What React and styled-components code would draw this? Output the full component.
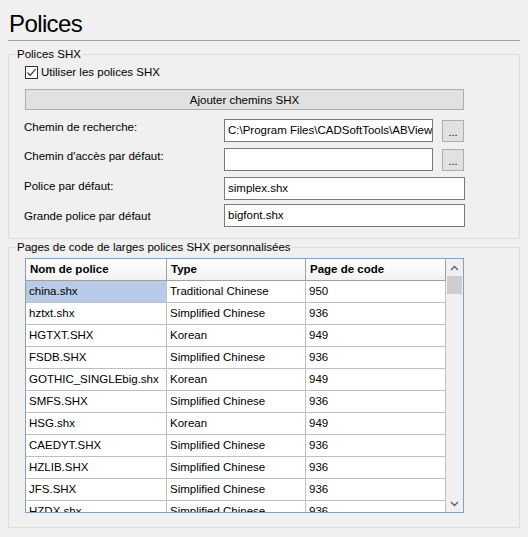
import React from 'react';
import styled, { createGlobalStyle } from 'styled-components';

const GlobalStyle = createGlobalStyle`
  * { box-sizing: border-box; }
  body {
    margin: 0;
    background: #f0f0f0;
    font-family: "Liberation Sans", Arial, sans-serif;
    font-size: 11.5px;
    color: #000;
  }
`;

const rows = [
  ['china.shx', 'Traditional Chinese', '950'],
  ['hztxt.shx', 'Simplified Chinese', '936'],
  ['HGTXT.SHX', 'Korean', '949'],
  ['FSDB.SHX', 'Simplified Chinese', '936'],
  ['GOTHIC_SINGLEbig.shx', 'Korean', '949'],
  ['SMFS.SHX', 'Simplified Chinese', '936'],
  ['HSG.shx', 'Korean', '949'],
  ['CAEDYT.SHX', 'Simplified Chinese', '936'],
  ['HZLIB.SHX', 'Simplified Chinese', '936'],
  ['JFS.SHX', 'Simplified Chinese', '936'],
  ['HZDX.shx', 'Simplified Chinese', '936'],
];

const App = () => (
  <Page>
    <GlobalStyle />
    <Title>Polices</Title>

    <Group height={185}>
      <Legend>Polices SHX</Legend>
      <CheckRow>
        <CheckBox>
          <svg width="11" height="11" viewBox="0 0 11 11">
            <path d="M1.5 5.5 L4.2 8.3 L9.6 2.2" fill="none" stroke="#333" strokeWidth="1.2" />
          </svg>
        </CheckBox>
        Utiliser les polices SHX
      </CheckRow>
      <WideButton type="button">Ajouter chemins SHX</WideButton>

      <Form>
        <FormRow>
          <Label shift={1}>Chemin de recherche:</Label>
          <Field narrow>C:\Program Files\CADSoftTools\ABViewer 15\Fonts</Field>
          <DotsButton type="button">...</DotsButton>
        </FormRow>
        <FormRow>
          <Label shift={1}>Chemin d'accès par défaut:</Label>
          <Field narrow />
          <DotsButton type="button">...</DotsButton>
        </FormRow>
        <FormRow>
          <Label shift={2}>Police par défaut:</Label>
          <Field>simplex.shx</Field>
        </FormRow>
        <FormRow>
          <Label shift={5}>Grande police par défaut</Label>
          <Field>bigfont.shx</Field>
        </FormRow>
      </Form>
    </Group>

    <Group height={281} top={8}>
      <Legend>Pages de code de larges polices SHX personnalisées</Legend>
      <Table>
        <Grid>
          <HeadRow>
            <HeadCell>Nom de police</HeadCell>
            <HeadCell>Type</HeadCell>
            <HeadCell>Page de code</HeadCell>
          </HeadRow>
          {rows.map((r, i) => (
            <Row key={r[0]}>
              <Cell selected={i === 0}>{r[0]}</Cell>
              <Cell>{r[1]}</Cell>
              <Cell>{r[2]}</Cell>
            </Row>
          ))}
        </Grid>
        <ScrollBar>
          <Arrow>
            <svg width="9" height="6" viewBox="0 0 9 6">
              <path d="M1 5 L4.5 1.5 L8 5" fill="none" stroke="#606060" strokeWidth="1.4" />
            </svg>
          </Arrow>
          <Thumb />
          <Track />
          <Arrow>
            <svg width="9" height="6" viewBox="0 0 9 6">
              <path d="M1 1 L4.5 4.5 L8 1" fill="none" stroke="#606060" strokeWidth="1.4" />
            </svg>
          </Arrow>
        </ScrollBar>
      </Table>
    </Group>
  </Page>
);

const Page = styled.div`
  width: 528px;
  height: 537px;
  overflow: hidden;
`;

const Title = styled.div`
  margin: 0 8px;
  height: 41px;
  padding: 9px 0 0 1px;
  line-height: 30px;
  font-size: 24px;
  letter-spacing: -0.6px;
  border-bottom: 1px solid #a0a0a0;
`;

const Group = styled.div`
  position: relative;
  margin: ${({ top }) => (top != null ? top : 13)}px 8px 0;
  width: 512px;
  height: ${({ height }) => height}px;
  border: 1px solid #dcdcdc;
  padding: 10px 0 0 16px;
`;

const Legend = styled.div`
  position: absolute;
  top: -9px;
  left: 7px;
  padding: 0 1px;
  line-height: 16px;
  background: #f0f0f0;
`;

const CheckRow = styled.div`
  display: flex;
  align-items: center;
  gap: 3px;
  height: 15px;
  line-height: 15px;
`;

const CheckBox = styled.span`
  display: flex;
  align-items: center;
  justify-content: center;
  width: 13px;
  height: 13px;
  border: 1px solid #333;
  background: #fff;
`;

const WideButton = styled.button`
  display: block;
  margin-top: 9px;
  width: 439px;
  height: 21px;
  padding: 0;
  border: 1px solid #adadad;
  background: #e1e1e1;
  font: inherit;
  color: #000;
`;

const Form = styled.div`
  display: grid;
  grid-template-rows: 23px 23px 23px 23px;
  row-gap: 6px;
  margin-top: 9px;

  & > :nth-child(4) {
    margin-top: -2px;
  }
`;

const FormRow = styled.div`
  display: grid;
  grid-template-columns: 199px auto auto;
  align-items: start;
  justify-content: start;
  height: 23px;
`;

const Label = styled.div`
  line-height: 15px;
  padding-top: ${({ shift }) => shift || 0}px;
  margin-left: -1px;
`;

const Field = styled.div`
  width: ${({ narrow }) => (narrow ? 209 : 241)}px;
  height: 23px;
  border: 1px solid #7a7a7a;
  background: #fff;
  padding: 0 3px;
  line-height: 21px;
  white-space: nowrap;
  overflow: hidden;
`;

const DotsButton = styled.button`
  margin: 1px 0 0 9px;
  width: 22px;
  height: 22px;
  padding: 0 0 3px;
  border: 1px solid #adadad;
  background: #e1e1e1;
  font: inherit;
  font-size: 11px;
  color: #000;
  display: flex;
  align-items: flex-end;
  justify-content: center;
`;

const Table = styled.div`
  display: flex;
  width: 439px;
  height: 255px;
  border: 1px solid #82a0c0;
  background: #fff;
  overflow: hidden;
`;

const Grid = styled.div`
  width: 420px;
  display: flex;
  flex-direction: column;
`;

const HeadRow = styled.div`
  display: grid;
  grid-template-columns: 141px 139px 140px;
  height: 22px;
  flex-shrink: 0;
  background: linear-gradient(#ffffff, #f2f2f2);
  border-bottom: 1px solid #a0a0a0;
`;

const HeadCell = styled.div`
  font-weight: bold;
  line-height: 21px;
  padding-left: 4px;
  border-right: 1px solid #a0a0a0;
`;

const Row = styled.div`
  display: grid;
  grid-template-columns: 141px 139px 140px;
  height: 22px;
  flex-shrink: 0;
  border-bottom: 1px solid #c0c0c0;
`;

const Cell = styled.div`
  line-height: 21px;
  padding-left: 3px;
  border-right: 1px solid #c0c0c0;
  background: ${({ selected }) => (selected ? '#b7cbe8' : '#fff')};
  white-space: nowrap;
  overflow: hidden;
`;

const ScrollBar = styled.div`
  width: 17px;
  display: flex;
  flex-direction: column;
  background: #f0f0f0;
`;

const Arrow = styled.div`
  height: 17px;
  display: flex;
  align-items: center;
  justify-content: center;
  flex-shrink: 0;
`;

const Thumb = styled.div`
  margin: 0 1px;
  height: 18px;
  background: #cdcdcd;
  flex-shrink: 0;
`;

const Track = styled.div`
  flex: 1;
`;

export default App;
